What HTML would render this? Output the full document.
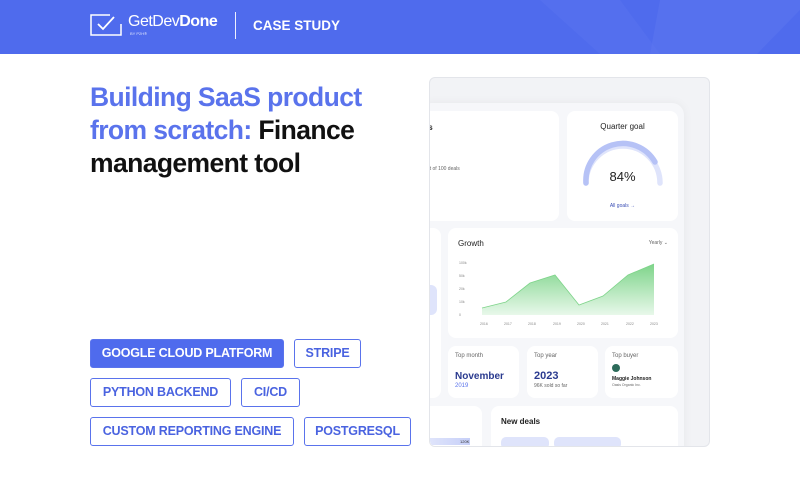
<!DOCTYPE html>
<html><head><meta charset="utf-8"><style>
*{margin:0;padding:0;box-sizing:border-box}
body{width:800px;height:480px;overflow:hidden;background:#fff;font-family:"Liberation Sans",sans-serif;position:relative}
.hdr{position:absolute;left:0;top:0;width:800px;height:54px;background:#4f6bed;overflow:hidden}
.tri{position:absolute}
.title{position:absolute;left:90px;top:81px;font-size:26.5px;font-weight:bold;line-height:33px;letter-spacing:-0.6px;color:#111}
.title span{color:#5a73ec}
.tag{position:absolute;height:29px;border:1.5px solid #5a73ec;border-radius:3px;color:#4a63e0;font-size:12.5px;font-weight:bold;line-height:27px;text-align:center;letter-spacing:-0.2px}
.tag.f{background:#4f6bed;color:#fff}
.frame{position:absolute;left:429px;top:77px;width:281px;height:370px;background:#f2f3f6;border:1px solid #e3e5ea;border-radius:6px;overflow:hidden}
.panel{position:absolute;left:-10px;top:25px;width:264px;height:360px;background:#f6f7fa;border-radius:12px;box-shadow:0 0 10px rgba(0,0,0,.05)}
.c{position:absolute;background:#fff;border-radius:8px}
.s{font-size:6px;color:#666}
</style></head><body>
<div class="hdr">
<svg class="tri" width="800" height="54" style="left:0;top:0"><polygon points="540,0 620,0 660,54 600,54" fill="#5a75ef" opacity=".45"/><polygon points="660,0 800,0 800,10 760,54 650,54" fill="#5d77ef" opacity=".5"/><polygon points="800,10 800,54 757,54" fill="#4f6bed"/></svg>
<svg style="position:absolute;left:90px;top:14px" width="32" height="22" viewBox="0 0 32 22"><path d="M20 1 H1 V21 H31 V10" fill="none" stroke="#fff" stroke-width="1.5"/><path d="M8 10 L13 15 L24 3" fill="none" stroke="#fff" stroke-width="1.8"/></svg>
<div style="position:absolute;left:128px;top:13px;color:#fff;font-size:16px;letter-spacing:-0.5px">GetDev<b>Done</b></div>
<div style="position:absolute;left:130px;top:31px;color:#fff;font-size:4px;opacity:.8">BY P2H®</div>
<div style="position:absolute;left:235px;top:12px;width:1px;height:27px;background:#fff;opacity:.9"></div>
<div style="position:absolute;left:253px;top:18px;color:#fff;font-size:13.5px;font-weight:bold">CASE STUDY</div>
</div>
<div class="title"><span>Building SaaS product<br>from scratch:</span> Finance<br>management tool</div>
<div class="tag f" style="left:90px;top:339px;width:194px">GOOGLE CLOUD PLATFORM</div>
<div class="tag" style="left:294px;top:339px;width:67px">STRIPE</div>
<div class="tag" style="left:90px;top:378px;width:141px">PYTHON BACKEND</div>
<div class="tag" style="left:241px;top:378px;width:59px">CI/CD</div>
<div class="tag" style="left:90px;top:417px;width:204px">CUSTOM REPORTING ENGINE</div>
<div class="tag" style="left:304px;top:417px;width:107px">POSTGRESQL</div>
<div class="frame">
<div class="panel"></div>
<div class="c" style="left:-10px;top:33px;width:139px;height:110px"><div style="position:absolute;left:6px;top:12px;font-size:8px;font-weight:bold;color:#222">ls</div><div class="s" style="position:absolute;left:0;top:55px;font-size:5px">8 out of 100 deals</div></div>
<div class="c" style="left:137px;top:33px;width:111px;height:110px">
<div style="position:absolute;width:100%;text-align:center;top:11px;font-size:8px;color:#222">Quarter goal</div>
<svg style="position:absolute;left:12px;top:28px" width="88" height="50"><path d="M7 44 A37 37 0 0 1 81 44" fill="none" stroke="#dfe4fb" stroke-width="5.5" stroke-linecap="round"/><path d="M7 44 A37 37 0 0 1 76 23" fill="none" stroke="#b6c2f6" stroke-width="5.5" stroke-linecap="round"/></svg>
<div style="position:absolute;width:100%;text-align:center;top:58px;font-size:13px;color:#222">84%</div>
<div style="position:absolute;width:100%;text-align:center;top:92px;font-size:5px;color:#3b4fb5">All goals →</div>
</div>
<div class="c" style="left:-10px;top:150px;width:21px;height:170px"><div style="position:absolute;left:0;top:57px;width:17px;height:30px;background:#dfe4fb;border-radius:6px"></div></div>
<div class="c" style="left:18px;top:150px;width:230px;height:110px">
<div style="position:absolute;left:10px;top:11px;font-size:8px;color:#222">Growth</div>
<div class="s" style="position:absolute;right:10px;top:12px;font-size:5px">Yearly ⌄</div>
<svg style="position:absolute;left:0;top:25px" width="230" height="80"><defs><linearGradient id="g" x1="0" y1="0" x2="0" y2="1"><stop offset="0" stop-color="#7ed48a"/><stop offset="1" stop-color="#e8f8ea"/></linearGradient></defs>
<g font-size="3.5" fill="#888" font-family="Liberation Sans"><text x="11" y="11">100k</text><text x="11" y="24">50k</text><text x="11" y="37">20k</text><text x="11" y="50">10k</text><text x="11" y="63">0</text>
<text x="32" y="72">2016</text><text x="56" y="72">2017</text><text x="80" y="72">2018</text><text x="105" y="72">2019</text><text x="129" y="72">2020</text><text x="153" y="72">2021</text><text x="178" y="72">2022</text><text x="202" y="72">2023</text></g>
<path d="M34 55 L58 49 L82 30 L107 22 L131 52 L155 43 L180 22 L206 11 L206 62 L34 62Z" fill="url(#g)"/><path d="M34 55 L58 49 L82 30 L107 22 L131 52 L155 43 L180 22 L206 11" fill="none" stroke="#7ed48a" stroke-width=".8"/></svg>
</div>
<div class="c" style="left:18px;top:268px;width:71px;height:52px"><div class="s" style="position:absolute;left:7px;top:7px">Top month</div><div style="position:absolute;left:7px;top:25px;font-size:10px;font-weight:bold;color:#2a3a8f">November</div><div style="position:absolute;left:7px;top:37px;font-size:6px;color:#5a73ec">2019</div></div>
<div class="c" style="left:97px;top:268px;width:71px;height:52px"><div class="s" style="position:absolute;left:7px;top:7px">Top year</div><div style="position:absolute;left:7px;top:24px;font-size:11px;font-weight:bold;color:#2a3a8f">2023</div><div class="s" style="position:absolute;left:7px;top:37px;font-size:5px">96K sold so far</div></div>
<div class="c" style="left:175px;top:268px;width:73px;height:52px"><div class="s" style="position:absolute;left:7px;top:7px">Top buyer</div><div style="position:absolute;left:7px;top:18px;width:8px;height:8px;border-radius:50%;background:#2d6b5a"></div><div style="position:absolute;left:7px;top:30px;font-size:5px;font-weight:bold;color:#222">Maggie Johnson</div><div class="s" style="position:absolute;left:7px;top:37px;font-size:3.5px">Oasis Organic Inc.</div></div>
<div class="c" style="left:-10px;top:328px;width:62px;height:60px"><div style="position:absolute;left:10px;top:32px;width:40px;height:7px;background:linear-gradient(90deg,#dfe4fb,#c6cff8)"></div><div style="position:absolute;left:40px;top:33px;font-size:4px;color:#333">120K</div></div>
<div class="c" style="left:61px;top:328px;width:187px;height:60px"><div style="position:absolute;left:10px;top:11px;font-size:8px;font-weight:bold;color:#222">New deals</div><div style="position:absolute;left:10px;top:31px;width:48px;height:12px;background:#dfe4fb;border-radius:5px"></div><div style="position:absolute;left:63px;top:31px;width:67px;height:12px;background:#dfe4fb;border-radius:5px"></div></div>
</div>
</body></html>
